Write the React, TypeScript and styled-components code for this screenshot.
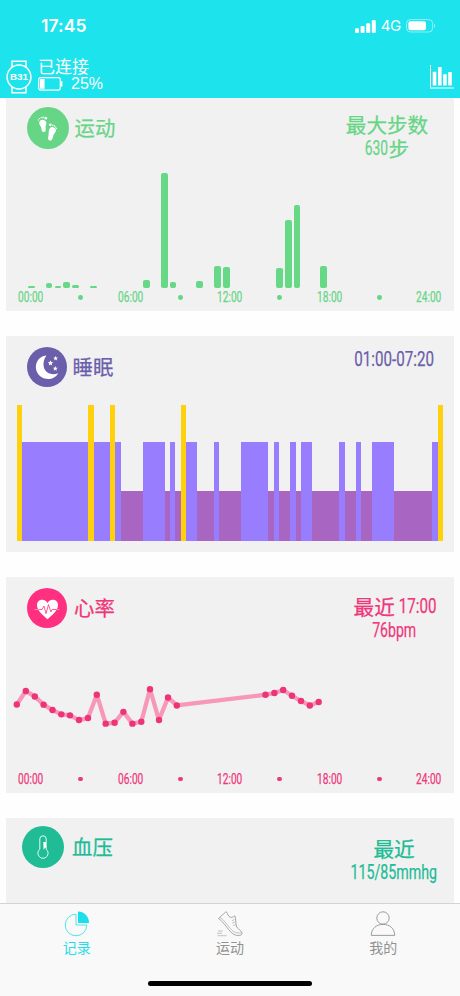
import React from "react";
import styled, { createGlobalStyle } from "styled-components";

const GlobalStyle = createGlobalStyle`
  * { box-sizing: border-box; }
  body { margin: 0; background: #fff; }
`;

const CJK = `"Noto Sans CJK SC"`;

const Screen = styled.div`
  width: 460px;
  height: 996px;
  display: flex;
  flex-direction: column;
  overflow: hidden;
  background: #fefefe;
  font-family: Roboto, ${CJK}, sans-serif;
`;

const Header = styled.header`
  flex: none;
  height: 98px;
  background: #1de3ed;
  color: #fff;
  display: flex;
  flex-direction: column;
`;

const StatusBar = styled.div`
  height: 52px;
  padding: 0 24px 0 41px;
  display: flex;
  align-items: center;
  justify-content: space-between;
`;

const Clock = styled.span`
  font: 600 17.5px/20px Inter, sans-serif;
  letter-spacing: 0.1px;
`;

const StatusIcons = styled.div`
  display: flex;
  align-items: center;
  gap: 5px;
`;

const Network = styled.span`
  font: 400 15px/20px Inter, sans-serif;
  letter-spacing: -0.3px;
`;

const DeviceBar = styled.div`
  height: 46px;
  padding: 3px 6px 0 6px;
  display: flex;
  align-items: center;
`;

const DeviceInfo = styled.div`
  margin-left: 6px;
  padding-bottom: 4px;
  flex: 1;
  display: flex;
  flex-direction: column;
`;

const Connected = styled.span`
  font: 400 17px/19px ${CJK}, sans-serif;
`;

const Charge = styled.div`
  display: flex;
  align-items: center;
  gap: 8px;
  height: 18px;
  font: 400 16px/18px "Liberation Sans", sans-serif;
`;

const Feed = styled.main`
  flex: 1;
  min-height: 0;
  overflow: hidden;
  display: flex;
  flex-direction: column;
  gap: 25.1px;
  padding: 0 6px;
`;

const Card = styled.section<{ $tone: string; $h?: number }>`
  flex: none;
  height: ${(p) => p.$h ?? 215.7}px;
  background: #f1f1f1;
  color: ${(p) => p.$tone};
  display: flex;
  flex-direction: column;
`;

const CardHead = styled.div<{ $h: number; $top: number; $left: number }>`
  flex: none;
  height: ${(p) => p.$h}px;
  padding: ${(p) => p.$top}px 0 0 ${(p) => p.$left}px;
  display: flex;
  align-items: flex-start;
`;

const Badge = styled.div<{ $size: number; $fill?: string }>`
  width: ${(p) => p.$size}px;
  height: ${(p) => p.$size}px;
  border-radius: 50%;
  background: ${(p) => p.$fill ?? "currentColor"};
  display: grid;
  place-items: center;
  svg { display: block; }
`;

const Title = styled.h2<{ $h: number; $gap?: number }>`
  margin: -1px 0 0 ${(p) => p.$gap ?? 6}px;
  font: 400 20.4px/${(p) => p.$h}px ${CJK}, sans-serif;
  -webkit-text-stroke: 0.25px currentColor;
`;

const Stat = styled.div<{ $right: number; $top: number }>`
  margin: ${(p) => p.$top}px ${(p) => p.$right}px 0 auto;
  width: 100px;
  display: flex;
  flex-direction: column;
  align-items: center;
`;

const StatLine = styled.div`
  height: 24px;
  display: flex;
  align-items: center;
  justify-content: center;
  white-space: nowrap;
  font: 400 20.6px/24px ${CJK}, sans-serif;
  -webkit-text-stroke: 0.25px currentColor;
`;

const NarrowBox = styled.span<{ $w: number }>`
  width: ${(p) => p.$w}px;
  display: inline-flex;
  justify-content: center;
`;

const NarrowText = styled.span<{ $scale: number; $size: number }>`
  flex: none;
  font: 400 ${(p) => p.$size}px/1.17 Roboto, sans-serif;
  white-space: nowrap;
  -webkit-text-stroke: 0.25px currentColor;
  transform: scaleX(${(p) => p.$scale});
`;

const Narrow = ({ children, w, scale = 0.735, size = 20.6 }: { children: string; w: number; scale?: number; size?: number }) => (
  <NarrowBox $w={w}>
    <NarrowText $scale={scale} $size={size}>{children}</NarrowText>
  </NarrowBox>
);

const StepChart = styled.div`
  flex: 1;
  display: grid;
  grid-template-columns: repeat(48, 8.87px);
  padding-left: 12px;
  align-items: end;
  justify-items: center;
`;

const StepBar = styled.i<{ $h: number }>`
  width: 6.7px;
  height: ${(p) => p.$h}px;
  border-radius: ${(p) => Math.min(2, p.$h / 2)}px;
  background: #67d886;
`;

const SleepChart = styled.div`
  flex: none;
  height: 135.6px;
  padding-left: 11px;
  display: flex;
  align-items: flex-end;
`;

const stages = {
  awake: { color: "#ffd00c", height: 135.6 },
  light: { color: "#987eff", height: 99.2 },
  deep: { color: "#a866c2", height: 49.6 },
};
type Stage = keyof typeof stages;

const SleepBlock = styled.i<{ $stage: Stage; $n: number }>`
  width: ${(p) => p.$n * 5.467}px;
  height: ${(p) => stages[p.$stage].height}px;
  background: ${(p) => stages[p.$stage].color};
`;

const Axis = styled.div`
  flex: none;
  height: 22.6px;
  display: grid;
  grid-template-columns: repeat(9, 1fr);
  justify-items: center;
`;

const Tick = styled.div`
  height: 18px;
  display: flex;
  align-items: center;
`;

const Dot = styled.i`
  width: 4.8px;
  height: 4.8px;
  border-radius: 50%;
  background: currentColor;
`;

const PulseChart = styled.svg`
  display: block;
  flex: 1;
  min-height: 0;
  width: 448px;
`;

const TabBar = styled.nav`
  flex: none;
  height: 93px;
  background: #f9f9f9;
  border-top: 1px solid #d4d4d6;
  display: flex;
  flex-direction: column;
  align-items: center;
`;

const Tabs = styled.div`
  width: 100%;
  display: grid;
  grid-template-columns: repeat(3, 1fr);
  height: 77px;
`;

const Tab = styled.div<{ $active?: boolean }>`
  padding-top: 7px;
  display: flex;
  flex-direction: column;
  align-items: center;
  color: ${(p) => (p.$active ? "#28dde9" : "#929292")};
  font: 400 14px/20px ${CJK}, sans-serif;
  svg { display: block; }
`;

const HomeIndicator = styled.div`
  width: 164px;
  height: 5.4px;
  border-radius: 3px;
  background: #000;
`;

const stepBars: Record<number, number> = {
  1: 2, 3: 5.4, 4: 2.4, 5: 6.8, 6: 3.2, 8: 2, 14: 8, 16: 115, 17: 6.4, 20: 7,
  22: 22, 23: 21, 29: 20, 30: 68.3, 31: 83, 34: 22.5,
};

const night: [Stage, number][] = [
  ["awake", 1], ["light", 12], ["awake", 1], ["light", 3], ["awake", 1], ["light", 1],
  ["deep", 4], ["light", 4], ["deep", 1], ["light", 1], ["deep", 1], ["awake", 1],
  ["light", 2], ["deep", 3], ["light", 1], ["deep", 4], ["light", 5], ["deep", 1],
  ["light", 1], ["deep", 2], ["light", 1], ["deep", 1], ["light", 2], ["deep", 5],
  ["light", 1], ["deep", 2], ["light", 1], ["deep", 2], ["light", 4], ["deep", 7],
  ["light", 1], ["awake", 1],
];

const pulse: [number, number][] = [
  [16.8, 134.5], [25.8, 121], [34.8, 126.4], [43.6, 134.6], [52.5, 140], [61.3, 144.3],
  [70, 145.3], [79, 150], [88, 148], [96.8, 124.7], [105.7, 153.6], [114.6, 152.7],
  [123.4, 141.8], [132.4, 153.6], [141.3, 151.7], [150, 119.2], [159, 150], [168, 127.4],
  [176.8, 135.4], [265.5, 124.7], [274.4, 123], [283.2, 120], [292, 125.7], [301, 131],
  [309.8, 135.4], [318.7, 132],
];

const TimeAxis = () => (
  <Axis>
    {["00:00", "", "06:00", "", "12:00", "", "18:00", "", "24:00"].map((t, i) => (
      <Tick key={i}>{t ? <Narrow w={25} size={14.2} scale={0.715}>{t}</Narrow> : <Dot />}</Tick>
    ))}
  </Axis>
);

const WatchIcon = () => (
  <svg width="26" height="34" viewBox="0 0 26 34" fill="none" stroke="#fff" strokeWidth="1.5">
    <circle cx="13" cy="17" r="11.9" />
    <path d="M6 7.5V1.200h14v6.300M6 26.500v6.300h14v-6.300" />
    <text x="13" y="20.200" textAnchor="middle" fill="#fff" stroke="none" fontFamily="Liberation Sans" fontWeight="700" fontSize="9" textLength="18" lengthAdjust="spacingAndGlyphs">B31</text>
  </svg>
);

const DeviceBattery = () => (
  <svg width="25" height="14" viewBox="0 0 25 14">
    <rect x=".7" y=".7" width="21.6" height="12.4" rx="2" fill="none" stroke="#fff" strokeWidth="1.2" />
    <rect x="2" y="2" width="4.6" height="9.8" rx=".6" fill="#fff" />
    <path d="M23 4.3h1.4v5.2H23z" fill="#fff" />
  </svg>
);

const SignalIcon = () => (
  <svg width="21" height="13" viewBox="0 0 21 13" fill="#fff">
    <rect x="0" y="8.3" width="4" height="4.7" rx="1" />
    <rect x="5.6" y="6" width="4" height="7" rx="1" />
    <rect x="11.2" y="3.2" width="4" height="9.8" rx="1" />
    <rect x="16.8" y="0" width="4" height="13" rx="1" />
  </svg>
);

const PhoneBattery = () => (
  <svg width="30" height="14" viewBox="0 0 30 14">
    <rect x=".6" y=".6" width="26" height="12.4" rx="3.8" fill="none" stroke="#fff" strokeOpacity=".5" />
    <rect x="2.4" y="2.3" width="17.6" height="9" rx="2" fill="#fff" />
    <path d="M28 4.8c1.6.6 1.6 3.6 0 4.2z" fill="#fff" fillOpacity=".5" />
  </svg>
);

const ReportIcon = () => (
  <svg width="24" height="24" viewBox="0 0 24 24" fill="#fff">
    <path d="M0 0h1v22.6h23v1H0z" />
    <path d="M2.7 6.8h3.6v13.7H2.7zM8 2h3.6v18.5H8zM13.1 9.2h3.6v11.3h-3.6zM18.2 7h3.6v13.5h-3.6z" />
  </svg>
);

const FeetIcon = () => (
  <svg width="42" height="42" viewBox="0 0 42 42" fill="#fff">
    <path d="M12.300 15.300c.3-2 2-2.800 4-2.400 2.400.4 3.400 1.800 3 3.900-.4 1.800-.9 3-.6 4.900.3 2-.4 3.300-1.900 3.300-1.600 0-2.300-1.300-2.300-3 0-2.500-2.600-4-2.200-6.700z" />
    <circle cx="18.8" cy="11.2" r="1.35" />
    <circle cx="16.1" cy="10.4" r=".8" /><circle cx="14.2" cy="10.7" r=".7" /><circle cx="12.5" cy="11.6" r=".65" /><circle cx="11.3" cy="12.9" r=".6" />
    <path d="M22.400 22c.8-2 2.500-2.500 4.400-1.600 2.200 1 2.800 2.700 1.700 4.600-.9 1.500-2.100 2.400-2.400 4.300-.5 3-1.400 4.700-3.400 4.300-1.700-.4-1.900-2-1.400-3.600.8-2.800-.1-5.200 1.100-8z" />
    <circle cx="23.3" cy="17.8" r="1.35" />
    <circle cx="25.9" cy="18.3" r=".8" /><circle cx="27.5" cy="19" r=".7" /><circle cx="28.8" cy="20.2" r=".65" /><circle cx="29.5" cy="21.6" r=".6" />
  </svg>
);

const star = "M0-2.8.8-.9 2.800-.8 1.200.5 1.700 2.500 0 1.400-1.700 2.500-1.200.5-2.800-.8-.8-.9z";
const MoonIcon = () => (
  <svg width="40" height="40" viewBox="0 0 40 40" fill="#fff">
    <path d="M19.500 8.600C11 9 7.600 17.400 9.300 23.200c2.800 10 17 12 22 3-7.400 2.800-13.500-.6-14.600-6.600-.7-4 .3-7.900 2.800-11z" />
    <path transform="translate(28.600 11.300) scale(.85)" d={star} />
    <path transform="translate(23.500 16)" d={star} />
    <path transform="translate(28.300 21.500) scale(.9)" d={star} />
  </svg>
);

const HeartIcon = () => (
  <svg width="40" height="40" viewBox="0 0 40 40">
    <path d="M20.500 31.300C16 27 10 22.500 10 17.200c0-6 7.500-7.200 10.500-2.300 3-4.900 10.500-3.700 10.500 2.300 0 5.300-6 9.800-10.500 14.100z" fill="#fff" />
    <path d="M9 21.500H15l2-3.500 2 7.600 2.500-9 2.400 7.400 1.200-2.500h6" fill="none" stroke="#ff3080" strokeWidth=".8" />
    <path d="M7.500 21.500H12M29.500 21.500h3" stroke="#fff" strokeOpacity=".6" strokeWidth=".7" />
  </svg>
);

const ThermoIcon = () => (
  <svg width="42" height="42" viewBox="0 0 42 42" fill="none" stroke="#d9fff0" strokeWidth="1">
    <path d="M17.800 23.200V13a3.200 3.200 0 0 1 6.400 0v10.200a5.100 5.100 0 1 1-6.400 0z" />
    <path d="M21.300 16H24v5.500c-1.300.3-2 1.300-2.400 2.800z" fill="#fff" stroke="none" />
  </svg>
);

const RecordsIcon = () => (
  <svg width="26" height="26" viewBox="0 0 26 26" fill="none" stroke="currentColor" strokeWidth=".8">
    <path d="M12 3.200A10.800 10.800 0 1 0 22.800 14H12z" />
    <path d="M14 .6A11 11 0 0 1 25 12H14z" fill="#1be0ec" stroke="none" />
  </svg>
);

const ShoeIcon = () => (
  <svg width="28" height="26" viewBox="0 0 28 26" fill="none" stroke="currentColor" strokeWidth=".8" strokeLinejoin="round">
    <path d="M2.500 7.500 9.800.9c.8 0 1.300.6 1.500 1.400.7 2.300 2 4.200 4.200 4.100 1.700-.1 2.300-1.300 3.400-1.500 1.200 2.500.4 7.500 1.800 11.100 1.300 2.500 5.600 3.600 5.300 6.600-.2 2.100-3.500 2.200-6.500 1.500-3.500-1-6.200-4.600-9-8.300-2.700-3.600-5.300-6.600-8-8.300z" />
    <path d="M4 6.300c5 3 8.500 10 12.500 13.500 2.700 2.200 6 2.600 9.300 2M16 9.500l2.500-.8M16.200 12l2.600-.8M17 14.500l2.600-.8M2 20h4.500M1 22.300h5M1.500 24.700h9" strokeWidth=".55" />
  </svg>
);

const PersonIcon = () => (
  <svg width="26" height="26" viewBox="0 0 26 26" fill="none" stroke="currentColor" strokeWidth=".9">
    <circle cx="13" cy="7" r="6.2" />
    <path d="M1.300 24.400C1.300 17.500 6.300 13.400 13 13.400s11.700 4.100 11.700 11z" strokeLinejoin="round" />
  </svg>
);

export default function App() {
  return (
    <Screen>
      <GlobalStyle />
      <Header>
        <StatusBar>
          <Clock>17:45</Clock>
          <StatusIcons>
            <SignalIcon />
            <Network>4G</Network>
            <PhoneBattery />
          </StatusIcons>
        </StatusBar>
        <DeviceBar>
          <WatchIcon />
          <DeviceInfo>
            <Connected>已连接</Connected>
            <Charge><DeviceBattery />25%</Charge>
          </DeviceInfo>
          <ReportIcon />
        </DeviceBar>
      </Header>

      <Feed>
        <Card $tone="#67d586" $h={213}>
          <CardHead $h={66} $top={8.5} $left={20.5}>
            <Badge $size={42}><FeetIcon /></Badge>
            <Title $h={42}>运动</Title>
            <Stat $right={17} $top={5.5}>
              <StatLine>最大步数</StatLine>
              <StatLine><Narrow w={23.5} scale={0.67}>630</Narrow>步</StatLine>
            </Stat>
          </CardHead>
          <StepChart>
            {Array.from({ length: 48 }, (_, i) => <StepBar key={i} $h={stepBars[i] ?? 0} />)}
          </StepChart>
          <TimeAxis />
        </Card>

        <Card $tone="#6b5eab">
          <CardHead $h={69} $top={11} $left={20.5}>
            <Badge $size={40}><MoonIcon /></Badge>
            <Title $h={41}>睡眠</Title>
            <Stat $right={10} $top={0}>
              <StatLine><Narrow w={80}>01:00-07:20</Narrow></StatLine>
            </Stat>
          </CardHead>
          <SleepChart>
            {night.map(([stage, n], i) => <SleepBlock key={i} $stage={stage} $n={n} />)}
          </SleepChart>
        </Card>

        <Card $tone="#ef377b">
          <CardHead $h={63} $top={11.5} $left={21}>
            <Badge $size={40} $fill="#ff3080"><HeartIcon /></Badge>
            <Title $h={41} $gap={7}>心率</Title>
            <Stat $right={9.5} $top={6}>
              <StatLine>最近&nbsp;<Narrow w={36}>17:00</Narrow></StatLine>
              <StatLine><Narrow w={44} scale={0.685}>76bpm</Narrow></StatLine>
            </Stat>
          </CardHead>
          <PulseChart viewBox="6 70 448 130" preserveAspectRatio="none">
            <polyline points={pulse.map((p) => p.join(",")).join(" ")} fill="none" stroke="#f898b9" strokeWidth="4.3" strokeLinejoin="round" />
            {pulse.map(([x, y]) => <circle key={x} cx={x} cy={y} r="3.2" fill="#ee3478" />)}
          </PulseChart>
          <TimeAxis />
        </Card>

        <Card $tone="#20bc96">
          <CardHead $h={70} $top={8} $left={16}>
            <Badge $size={42}><ThermoIcon /></Badge>
            <Title $h={43} $gap={8}>血压</Title>
            <Stat $right={10} $top={10}>
              <StatLine>最近</StatLine>
              <StatLine><Narrow w={86} scale={0.69}>115/85mmhg</Narrow></StatLine>
            </Stat>
          </CardHead>
        </Card>
      </Feed>

      <TabBar>
        <Tabs>
          <Tab $active><RecordsIcon />记录</Tab>
          <Tab><ShoeIcon />运动</Tab>
          <Tab><PersonIcon />我的</Tab>
        </Tabs>
        <HomeIndicator />
      </TabBar>
    </Screen>
  );
}
